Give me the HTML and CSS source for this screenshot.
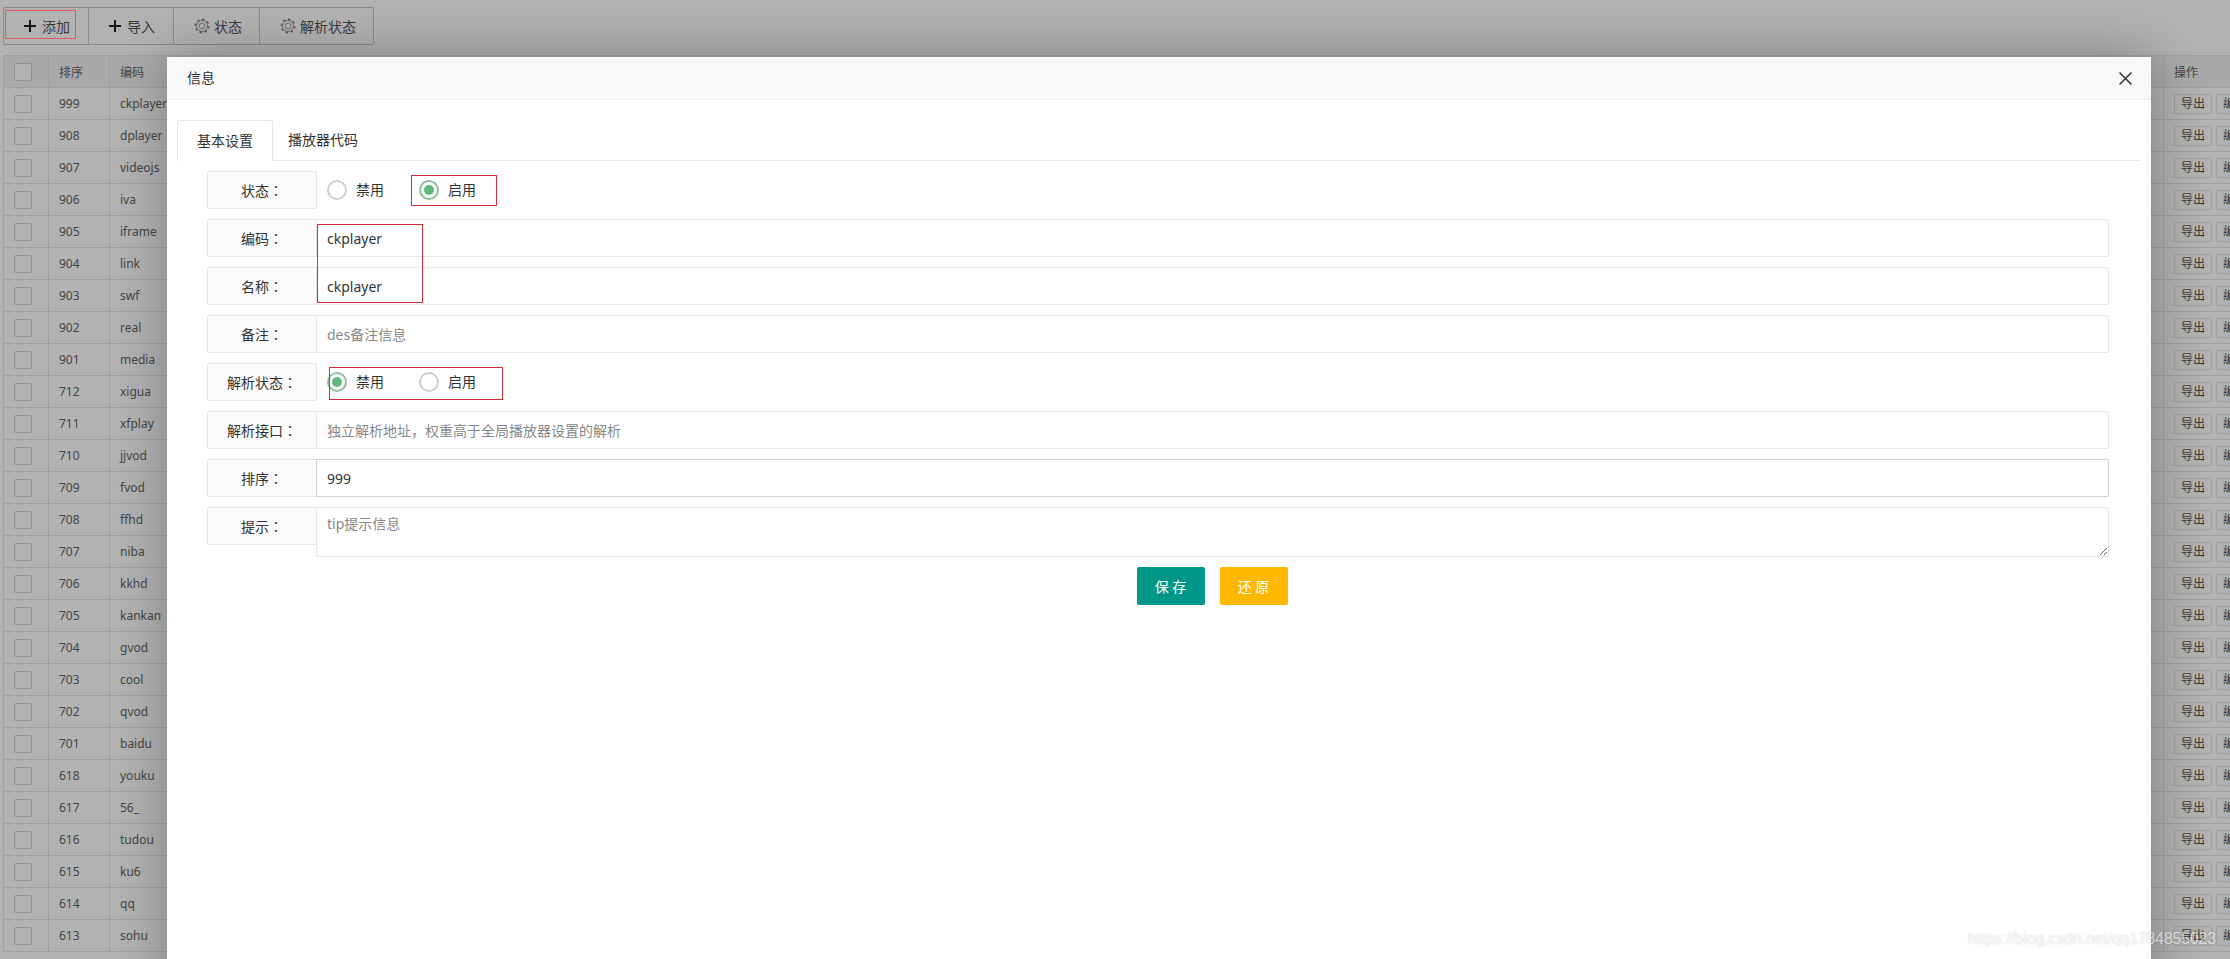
FILE: index.html
```html
<!DOCTYPE html>
<html lang="zh-CN">
<head>
<meta charset="utf-8">
<title>信息</title>
<link rel="stylesheet" href="styles.css">
</head>
<body>
<div class="page">
  <div class="toolbar">
    <button class="tb"><svg class="plus" viewBox="0 0 12 12"><path d="M6 0v12M0 6h12"/></svg><span>添加</span></button>
    <button class="tb"><svg class="plus" viewBox="0 0 12 12"><path d="M6 0v12M0 6h12"/></svg><span>导入</span></button>
    <button class="tb tb-gear"><svg class="gear" viewBox="0 0 16 16"><circle cx="8" cy="8" r="5.4"/><circle cx="8" cy="8" r="2.8"/><circle class="teeth" cx="8" cy="8" r="6.6" pathLength="32"/></svg><span>状态</span></button>
    <button class="tb tb-gear"><svg class="gear" viewBox="0 0 16 16"><circle cx="8" cy="8" r="5.4"/><circle cx="8" cy="8" r="2.8"/><circle class="teeth" cx="8" cy="8" r="6.6" pathLength="32"/></svg><span>解析状态</span></button>
  </div>

  <table class="grid">
    <thead>
      <tr><th class="c-check"><i class="box"></i></th><th class="c-sort">排序</th><th class="c-code">编码</th><th>名称</th><th class="c-op">操作</th></tr>
    </thead>
    <tbody>
      <tr><td><i class="box"></i></td><td>999</td><td>ckplayer</td><td>ckplayer</td><td><span class="mini">导出</span><span class="mini">编辑</span></td></tr>
      <tr><td><i class="box"></i></td><td>908</td><td>dplayer</td><td>dplayer</td><td><span class="mini">导出</span><span class="mini">编辑</span></td></tr>
      <tr><td><i class="box"></i></td><td>907</td><td>videojs</td><td>videojs</td><td><span class="mini">导出</span><span class="mini">编辑</span></td></tr>
      <tr><td><i class="box"></i></td><td>906</td><td>iva</td><td>iva</td><td><span class="mini">导出</span><span class="mini">编辑</span></td></tr>
      <tr><td><i class="box"></i></td><td>905</td><td>iframe</td><td>iframe</td><td><span class="mini">导出</span><span class="mini">编辑</span></td></tr>
      <tr><td><i class="box"></i></td><td>904</td><td>link</td><td>link</td><td><span class="mini">导出</span><span class="mini">编辑</span></td></tr>
      <tr><td><i class="box"></i></td><td>903</td><td>swf</td><td>swf</td><td><span class="mini">导出</span><span class="mini">编辑</span></td></tr>
      <tr><td><i class="box"></i></td><td>902</td><td>real</td><td>real</td><td><span class="mini">导出</span><span class="mini">编辑</span></td></tr>
      <tr><td><i class="box"></i></td><td>901</td><td>media</td><td>media</td><td><span class="mini">导出</span><span class="mini">编辑</span></td></tr>
      <tr><td><i class="box"></i></td><td>712</td><td>xigua</td><td>xigua</td><td><span class="mini">导出</span><span class="mini">编辑</span></td></tr>
      <tr><td><i class="box"></i></td><td>711</td><td>xfplay</td><td>xfplay</td><td><span class="mini">导出</span><span class="mini">编辑</span></td></tr>
      <tr><td><i class="box"></i></td><td>710</td><td>jjvod</td><td>jjvod</td><td><span class="mini">导出</span><span class="mini">编辑</span></td></tr>
      <tr><td><i class="box"></i></td><td>709</td><td>fvod</td><td>fvod</td><td><span class="mini">导出</span><span class="mini">编辑</span></td></tr>
      <tr><td><i class="box"></i></td><td>708</td><td>ffhd</td><td>ffhd</td><td><span class="mini">导出</span><span class="mini">编辑</span></td></tr>
      <tr><td><i class="box"></i></td><td>707</td><td>niba</td><td>niba</td><td><span class="mini">导出</span><span class="mini">编辑</span></td></tr>
      <tr><td><i class="box"></i></td><td>706</td><td>kkhd</td><td>kkhd</td><td><span class="mini">导出</span><span class="mini">编辑</span></td></tr>
      <tr><td><i class="box"></i></td><td>705</td><td>kankan</td><td>kankan</td><td><span class="mini">导出</span><span class="mini">编辑</span></td></tr>
      <tr><td><i class="box"></i></td><td>704</td><td>gvod</td><td>gvod</td><td><span class="mini">导出</span><span class="mini">编辑</span></td></tr>
      <tr><td><i class="box"></i></td><td>703</td><td>cool</td><td>cool</td><td><span class="mini">导出</span><span class="mini">编辑</span></td></tr>
      <tr><td><i class="box"></i></td><td>702</td><td>qvod</td><td>qvod</td><td><span class="mini">导出</span><span class="mini">编辑</span></td></tr>
      <tr><td><i class="box"></i></td><td>701</td><td>baidu</td><td>baidu</td><td><span class="mini">导出</span><span class="mini">编辑</span></td></tr>
      <tr><td><i class="box"></i></td><td>618</td><td>youku</td><td>youku</td><td><span class="mini">导出</span><span class="mini">编辑</span></td></tr>
      <tr><td><i class="box"></i></td><td>617</td><td>56_</td><td>56_</td><td><span class="mini">导出</span><span class="mini">编辑</span></td></tr>
      <tr><td><i class="box"></i></td><td>616</td><td>tudou</td><td>tudou</td><td><span class="mini">导出</span><span class="mini">编辑</span></td></tr>
      <tr><td><i class="box"></i></td><td>615</td><td>ku6</td><td>ku6</td><td><span class="mini">导出</span><span class="mini">编辑</span></td></tr>
      <tr><td><i class="box"></i></td><td>614</td><td>qq</td><td>qq</td><td><span class="mini">导出</span><span class="mini">编辑</span></td></tr>
      <tr><td><i class="box"></i></td><td>613</td><td>sohu</td><td>sohu</td><td><span class="mini">导出</span><span class="mini">编辑</span></td></tr>
    </tbody>
  </table>

  <div class="shade"></div>
  <div class="note note-add"></div>

  <div class="modal">
    <div class="modal-head">
      <span>信息</span>
      <svg class="close" viewBox="0 0 12 12"><path d="M.5.5l11 11M11.5.5l-11 11"/></svg>
    </div>
    <div class="tabs">
      <div class="tab tab-on">基本设置</div>
      <div class="tab">播放器代码</div>
    </div>
    <form class="form">
      <div class="row">
        <label class="lab">状态<span class="colon" lang="zh-Hant">：</span></label>
        <div class="radios">
          <span class="radio"><i class="dot"></i>禁用</span>
          <span class="radio"><i class="dot dot-on"></i>启用</span>
        </div>
      </div>
      <div class="row"><label class="lab">编码<span class="colon" lang="zh-Hant">：</span></label><input class="inp" value="ckplayer"></div>
      <div class="row"><label class="lab">名称<span class="colon" lang="zh-Hant">：</span></label><input class="inp" value="ckplayer"></div>
      <div class="row"><label class="lab">备注<span class="colon" lang="zh-Hant">：</span></label><input class="inp" placeholder="des备注信息"></div>
      <div class="row">
        <label class="lab">解析状态<span class="colon" lang="zh-Hant">：</span></label>
        <div class="radios">
          <span class="radio"><i class="dot dot-on"></i>禁用</span>
          <span class="radio"><i class="dot"></i>启用</span>
        </div>
      </div>
      <div class="row"><label class="lab">解析接口<span class="colon" lang="zh-Hant">：</span></label><input class="inp" placeholder="独立解析地址，权重高于全局播放器设置的解析"></div>
      <div class="row"><label class="lab">排序<span class="colon" lang="zh-Hant">：</span></label><input class="inp inp-focus" value="999"></div>
      <div class="row row-area"><label class="lab">提示<span class="colon" lang="zh-Hant">：</span></label><textarea class="area" placeholder="tip提示信息"></textarea></div>
      <div class="actions">
        <button type="button" class="btn btn-save">保 存</button>
        <button type="button" class="btn btn-reset">还 原</button>
      </div>
    </form>
    <div class="note note-on"></div>
    <div class="note note-code"></div>
    <div class="note note-parse"></div>
  </div>

  <div class="mark">https://blog.csdn.net/qq1784855023</div>
</div>
</body>
</html>
```

FILE: styles.css
```css
* { box-sizing: border-box; }
html, body { margin: 0; padding: 0; }
body {
  font-family: "Noto Sans", "Noto Sans CJK SC", sans-serif;
  font-size: 14px;
  color: #333;
  background: #fff;
}
.page {
  position: relative;
  width: 2230px;
  height: 959px;
  overflow: hidden;
  padding: 7px 0 0 3px;
}

/* toolbar */
.toolbar {
  display: flex;
  width: max-content;
  height: 38px;
  border: 1px solid #c9c9c9;
  border-radius: 2px;
  background: #fff;
}
.tb {
  display: flex;
  align-items: center;
  gap: 6px;
  height: 36px;
  padding: 0 18px 0 20px;
  border: 0;
  border-left: 1px solid #c9c9c9;
  background: transparent;
  font: inherit;
  color: #555;
}
.tb:first-child { border-left: 0; }
.tb-gear { gap: 5px; padding-right: 17px; }
.plus { width: 12px; height: 12px; fill: none; stroke: #222; stroke-width: 2; }
.gear { width: 16px; height: 16px; fill: none; stroke: #888; stroke-width: .8; margin-right: -1px; }
.gear .teeth { stroke-width: 1.6; stroke-dasharray: 2 2; }

/* table */
.grid {
  width: 2300px;
  margin-top: 10px;
  border-collapse: collapse;
  table-layout: fixed;
  font-size: 12px;
  color: #666;
  background: #fff;
}
.grid th, .grid td {
  height: 32px;
  padding: 0 10px;
  border: 1px solid #e6e6e6;
  font-weight: 400;
  text-align: left;
  white-space: nowrap;
  overflow: hidden;
}
.grid th { background: #f2f2f2; }
.c-check { width: 45px; }
.c-sort { width: 61px; }
.c-code { width: 140px; }
.c-op { width: 139px; }
.box {
  display: block;
  width: 18px;
  height: 18px;
  border: 1px solid #d2d2d2;
  border-radius: 2px;
  background: #fff;
}
.mini {
  display: inline-block;
  width: 38px;
  height: 20px;
  margin-right: 4px;
  border: 1px solid #e6e6e6;
  border-radius: 2px;
  line-height: 18px;
  text-align: center;
  vertical-align: middle;
  color: #555;
}

/* shade */
.shade {
  position: absolute;
  inset: 0;
  background: rgba(0, 0, 0, .3);
}

/* modal */
.modal {
  position: absolute;
  left: 167px;
  top: 57px;
  width: 1984px;
  height: 960px;
  background: #fff;
  box-shadow: 1px 1px 50px rgba(0, 0, 0, .3);
  padding-bottom: 20px;
}
.modal-head {
  display: flex;
  align-items: center;
  justify-content: space-between;
  height: 43px;
  padding: 0 19px 0 20px;
  border-bottom: 1px solid #eee;
  background: #f8f8f8;
  font-size: 14px;
  line-height: 1;
}
.close { width: 13px; height: 13px; fill: none; stroke: #333; stroke-width: 1.4; }
.tabs {
  display: flex;
  height: 41px;
  margin: 20px 11px 0 10px;
  border-bottom: 1px solid #e6e6e6;
}
.tab {
  height: 40px;
  padding: 0 15px;
  line-height: 40px;
  white-space: nowrap;
}
.tab-on {
  height: 41px;
  padding: 0 19px;
  border: 1px solid #e6e6e6;
  border-bottom: 1px solid #fff;
  border-radius: 2px 2px 0 0;
}
.form {
  display: flex;
  flex-direction: column;
  gap: 10px;
  margin: 10px 42px 0 40px;
}
.row { display: flex; height: 38px; }
.row-area { height: 50px; align-items: flex-start; }
.lab {
  flex: 0 0 110px;
  height: 38px;
  border: 1px solid #e6e6e6;
  border-radius: 2px 0 0 2px;
  background: #fbfbfb;
  line-height: 36px;
  text-align: center;
  white-space: nowrap;
}
.colon { font-family: "Noto Sans CJK TC", sans-serif; }
.inp, .area {
  flex: 1;
  min-width: 0;
  height: 100%;
  margin: 0 0 0 -1px;
  padding: 0 10px;
  border: 1px solid #e6e6e6;
  border-radius: 0 2px 2px 0;
  outline: 0;
  background: #fff;
  font: inherit;
  color: #333;
}
.inp::placeholder, .area::placeholder { color: #888; opacity: 1; }
.inp-focus { border-color: #d2d2d2; }
.area { padding-top: 6px; line-height: 20px; resize: vertical; }
.radios { display: flex; align-items: center; gap: 35px; padding-left: 10px; }
.radio { display: flex; align-items: center; gap: 9px; line-height: 1; }
.dot {
  position: relative;
  display: block;
  width: 20px;
  height: 20px;
  border: 2px solid #cfcfcf;
  border-radius: 50%;
}
.dot-on { border-color: #8fbd9e; }
.dot-on::after {
  content: "";
  position: absolute;
  left: 3px;
  top: 3px;
  width: 10px;
  height: 10px;
  border-radius: 50%;
  background: #5fb878;
}
.actions {
  display: flex;
  justify-content: center;
  gap: 15px;
  margin-left: 108px;
}
.btn {
  width: 68px;
  height: 38px;
  padding: 0;
  border: 0;
  border-radius: 2px;
  color: #fff;
  font: inherit;
}
.btn-save { background: #009688; }
.btn-reset { background: #ffb800; }

/* annotations drawn over the capture */
.note {
  position: absolute;
  border: 1px solid #d22f3a;
  pointer-events: none;
}
.note-add { left: 5px; top: 10px; width: 71px; height: 29px; border-color: #e05a5f; }
.note-on { left: 244px; top: 118px; width: 86px; height: 31px; }
.note-code { left: 150px; top: 167px; width: 106px; height: 79px; }
.note-parse { left: 162px; top: 310px; width: 174px; height: 33px; }

.mark {
  position: absolute;
  left: 1968px;
  top: 929px;
  font-family: "Liberation Sans", sans-serif;
  font-size: 15.6px;
  line-height: 20px;
  color: rgba(255, 255, 255, .65);
  text-shadow: 0 0 2px rgba(0, 0, 0, .18);
  white-space: nowrap;
}
```
